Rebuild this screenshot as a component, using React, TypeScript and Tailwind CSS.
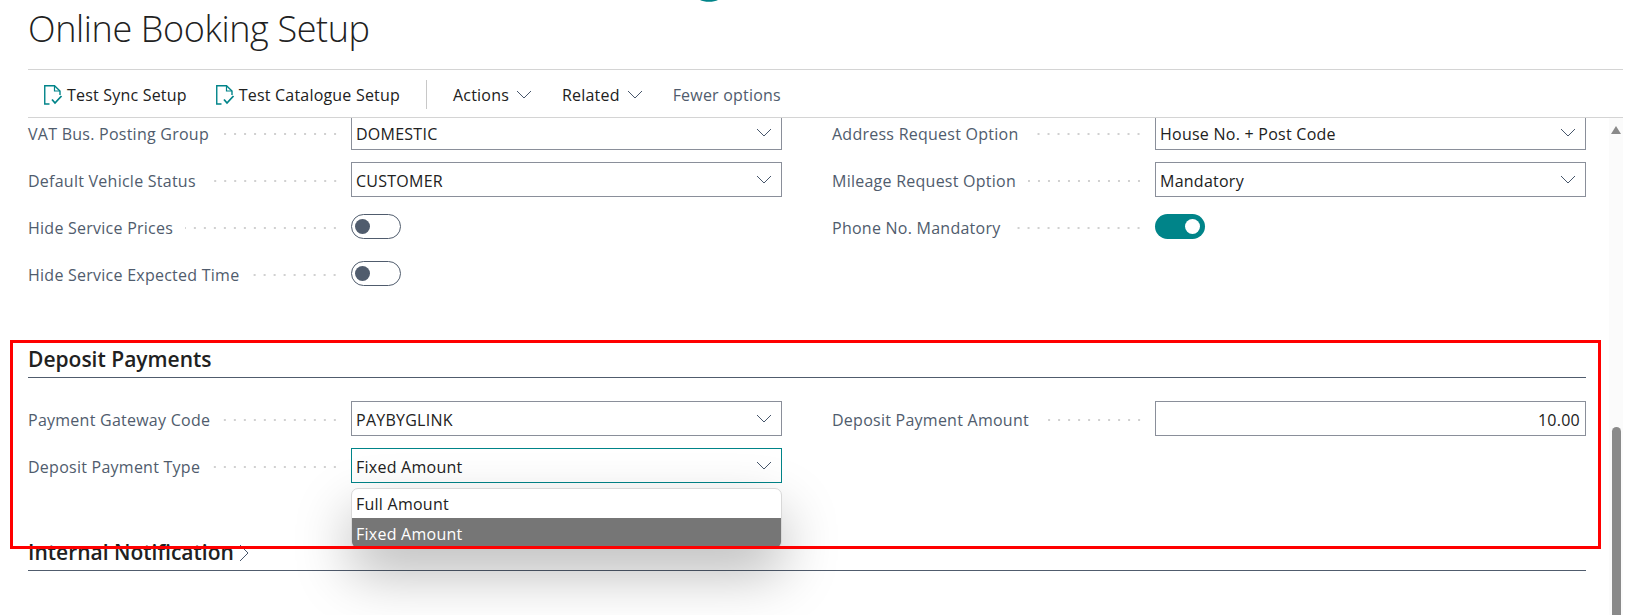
import type { ReactNode } from "react";

function Chevron({ className = "" }: { className?: string }) {
  return (
    <svg width="16" height="9" viewBox="0 0 16 9" fill="none" className={className}>
      <path d="M1 1l7 7 7-7" stroke="#47566b" strokeWidth="1" />
    </svg>
  );
}

function DocCheck() {
  return (
    <svg width="19" height="20" viewBox="0 0 19 20" fill="none" className="shrink-0">
      <path d="M5.5 19H.75V.75H10.5L16 6v4" stroke="#008489" strokeWidth="1.4" />
      <path d="M10.5.75V6H16" stroke="#008489" strokeWidth="1.2" />
      <path d="M8 14.5l3 3.5 6.5-7" stroke="#008489" strokeWidth="1.8" />
    </svg>
  );
}

function Field({ label, children }: { label: string; children: ReactNode }) {
  return (
    <div className="flex h-[47px] items-center">
      <div className="flex w-[323px] shrink-0 items-center pt-[3px]">
        <span className="whitespace-nowrap text-[16px] tracking-[0.25px] text-[#505c6d]">{label}</span>
        <span className="mr-[11px] ml-3 h-[4px] flex-1 bg-[radial-gradient(circle,#d0d0d0_1px,transparent_1.2px)] bg-[length:10px_4px] bg-right bg-repeat-x" />
      </div>
      {children}
    </div>
  );
}

function Select({ value, focused = false }: { value: string; focused?: boolean }) {
  return (
    <div
      className={`flex h-[35px] w-[431px] shrink-0 items-center justify-between border pr-[9px] pl-[4px] ${
        focused ? "border-[#008489]" : "border-[#8a8f9a]"
      }`}
    >
      <span className="pt-[2px] text-[16px] tracking-[0.25px] text-[#212121]">{value}</span>
      <Chevron />
    </div>
  );
}

function Toggle({ on = false }: { on?: boolean }) {
  if (on) {
    return (
      <div className="flex h-[25px] w-[50px] items-center justify-end rounded-full bg-[#008489] pr-[5px]">
        <div className="h-[15px] w-[15px] rounded-full bg-white" />
      </div>
    );
  }
  return (
    <div className="flex h-[25px] w-[50px] items-center rounded-full border border-[#505c6d] pl-[3px]">
      <div className="h-[15px] w-[15px] rounded-full bg-[#505c6d]" />
    </div>
  );
}

export default function App() {
  return (
    <div className="relative h-[615px] w-[1634px] overflow-hidden bg-white font-['Open_Sans',sans-serif]">
      <svg width="18" height="2" viewBox="0 0 18 2" className="absolute top-0 left-[700px]">
        <path d="M0 0c4 2.4 14 2.4 18 0z" fill="#008489" />
      </svg>

      <div className="ml-7 h-[70px] w-[1595px] border-b border-[#d4d4d4]">
        <h1 className="pt-[5px] text-[36px] leading-[48px] font-light tracking-[-0.38px] text-[#212121]">Online Booking Setup</h1>
      </div>

      <div className="ml-7 flex h-[48px] w-[1595px] items-center border-b border-[#d4d4d4] pt-[2px] text-[16px] tracking-[0.2px] text-[#212121]">
        <div className="ml-4 flex items-center gap-[4px]">
          <DocCheck />
          <span>Test Sync Setup</span>
        </div>
        <div className="ml-[29px] flex items-center gap-[4px]">
          <DocCheck />
          <span>Test Catalogue Setup</span>
        </div>
        <div className="ml-[26px] h-[29px] w-px bg-[#c8c8c8]" />
        <span className="ml-[26px]">Actions</span>
        <Chevron className="ml-[7px]" />
        <span className="ml-[30px]">Related</span>
        <Chevron className="ml-[7px]" />
        <span className="ml-[30px] text-[#505c6d]">Fewer options</span>
      </div>

      <div className="flex h-[497px] overflow-hidden">
        <div className="ml-7 w-[1558px]">
          <div className="-mt-[9px] grid h-[188px] grid-cols-[754px_754px] gap-x-[50px]">
            <div>
              <Field label="VAT Bus. Posting Group"><Select value="DOMESTIC" /></Field>
              <Field label="Default Vehicle Status"><Select value="CUSTOMER" /></Field>
              <Field label="Hide Service Prices"><Toggle /></Field>
              <Field label="Hide Service Expected Time"><Toggle /></Field>
            </div>
            <div>
              <Field label="Address Request Option"><Select value="House No. + Post Code" /></Field>
              <Field label="Mileage Request Option"><Select value="Mandatory" /></Field>
              <Field label="Phone No. Mandatory"><Toggle on /></Field>
            </div>
          </div>

          <div className="mt-[48px] flex h-[33px] items-center border-b border-[#505c6d] pb-[3px]">
            <h2 className="text-[21px] font-semibold text-[#212121]">Deposit Payments</h2>
          </div>
          <div className="mt-[17px] grid grid-cols-[754px_754px] gap-x-[50px]">
            <div>
              <Field label="Payment Gateway Code"><Select value="PAYBYGLINK" /></Field>
              <Field label="Deposit Payment Type">
                <div className="relative">
                  <Select value="Fixed Amount" focused />
                  <div className="absolute top-[40px] left-0 z-10 h-[61px] w-[431px] overflow-hidden rounded-[7px] border border-[#d8d8d8] bg-white text-[16px] tracking-[0.25px] shadow-[0_24px_56px_rgba(0,0,0,0.28)]">
                    <div className="flex h-[29px] items-center pl-[4px] text-[#212121]">Full Amount</div>
                    <div className="flex h-[32px] items-center bg-[#767676] pl-[4px] text-white">Fixed Amount</div>
                  </div>
                </div>
              </Field>
            </div>
            <div>
              <Field label="Deposit Payment Amount">
                <div className="flex h-[35px] w-[431px] shrink-0 items-center justify-end border border-[#8a8f9a] pt-[2px] pr-[5px] text-[16px] tracking-[0.25px] text-[#212121]">10.00</div>
              </Field>
            </div>
          </div>

          <div className="mt-[49px] flex h-[33px] items-center gap-[5px] border-b border-[#505c6d] pb-[3px]">
            <h2 className="text-[21px] font-semibold text-[#212121]">Internal Notification</h2>
            <svg width="10" height="18" viewBox="0 0 10 18" fill="none">
              <path d="M1 1l8 8-8 8" stroke="#47566b" strokeWidth="1" />
            </svg>
          </div>
        </div>

        <div className="ml-[23px] flex w-[14px] flex-col items-center bg-[#fbfbfb] pt-[8px]">
          <div className="h-0 w-0 border-x-[5px] border-b-[8px] border-x-transparent border-b-[#8a8a8a]" />
          <div className="mt-[293px] h-[200px] w-[9px] rounded-t-full bg-[#8a8a8a]" />
        </div>
      </div>

      <div className="pointer-events-none absolute top-[340px] left-[10px] z-20 h-[209px] w-[1591px] border-[3px] border-[#ff0000]" />
    </div>
  );
}
